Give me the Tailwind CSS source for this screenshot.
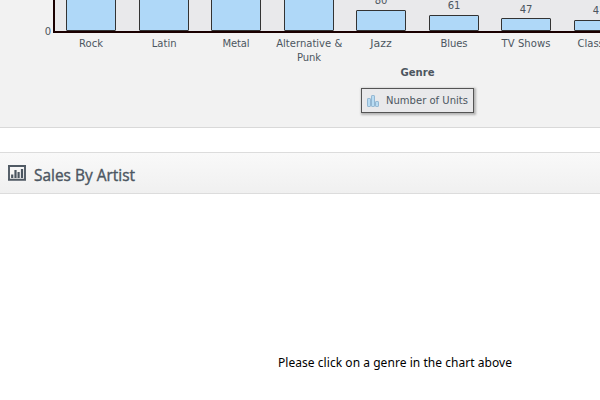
<!DOCTYPE html>
<html lang="en">
<head>
<meta charset="utf-8">
<title>Sales</title>
<script src="https://cdn.jsdelivr.net/npm/@tailwindcss/browser@4"></script>
</head>
<body class="flex h-[400px] w-[600px] flex-col overflow-hidden bg-white">
<section class="flex h-32 shrink-0 flex-col border-b border-[#d9d9d9] bg-[#f2f2f2] font-['DejaVu_Sans',sans-serif]">
  <svg class="block h-[84px] w-[600px] shrink-0" viewBox="0 0 600 84" font-size="10" fill="#4c565f" text-anchor="middle">
    <rect x="54" y="0" width="546" height="32" fill="#e9e9eb"/>
    <g fill="#afd8f8" stroke="#333333">
      <rect x="66.5" y="-20.5" width="49" height="51" rx="0.5"/>
      <rect x="139.5" y="-20.5" width="49" height="51" rx="0.5"/>
      <rect x="211.5" y="-20.5" width="49" height="51" rx="0.5"/>
      <rect x="284.500" y="-20.5" width="49" height="51" rx="0.5"/>
      <rect x="356.5" y="10.5" width="49" height="20" rx="0.5"/>
      <rect x="429.5" y="15.5" width="49" height="15" rx="0.5"/>
      <rect x="501.5" y="18.5" width="49" height="12" rx="0.5"/>
      <rect x="574.5" y="20.5" width="49" height="10" rx="0.5"/>
    </g>
    <path d="M54 0V32H600" fill="none" stroke="#1a0000" stroke-width="2"/>
    <text x="48" y="35">0</text>
    <text x="381" y="4">80</text>
    <text x="454" y="9">61</text>
    <text x="526" y="13">47</text>
    <text x="599" y="14">41</text>
    <text x="91" y="47" textLength="24">Rock</text>
    <text x="164.200" y="47" textLength="25">Latin</text>
    <text x="236" y="47" textLength="27">Metal</text>
    <text x="309.200" y="47" textLength="66">Alternative &amp;</text>
    <text x="309" y="61" textLength="24">Punk</text>
    <text x="381" y="47" textLength="21.500" lengthAdjust="spacingAndGlyphs">Jazz</text>
    <text x="454" y="47" textLength="27">Blues</text>
    <text x="526" y="47" textLength="49">TV Shows</text>
    <text x="577.5" y="47" text-anchor="start">Classical</text>
    <text x="417.500" y="76" font-weight="bold" textLength="34" lengthAdjust="spacingAndGlyphs">Genre</text>
  </svg>
  <div class="mt-1 ml-[361px] flex h-[25px] w-[113px] items-center border border-[#545454] bg-[#e9e9eb] pl-[5px] shadow-[1px_1px_2px_1px_#b4b4b4]">
    <svg class="h-3 w-3 shrink-0" viewBox="0 0 12 12" fill="#b9dcf3" stroke="#8bb2cf" stroke-width=".9">
      <rect x=".5" y="3.500" width="3" height="8" rx=".6"/><rect x="4.500" y=".5" width="3" height="11" rx=".6"/><rect x="8.500" y="6.500" width="3" height="5" rx=".6"/>
    </svg>
    <svg class="ml-[7px] h-6 w-[84px] shrink-0" fill="#4c565f" font-size="10"><text x="0" y="15" textLength="82">Number of Units</text></svg>
  </div>
</section>
<header class="mt-6 flex h-[42px] shrink-0 items-center border-y border-[#dcdcdc] bg-linear-to-b from-[#f9f9f9] to-[#f0f0f0] pl-2">
  <svg class="h-4 w-[18px] shrink-0" viewBox="0 0 18 16">
    <path d="M1 .5V15.500M17 .5V15.500M0 1H18M0 14.700H18" fill="none" stroke="#505a64" stroke-width="1.900"/>
    <path d="M4.200 13V9.500M7.500 13V5M10.600 13V7M14 13V4" stroke="#4a5560" stroke-width="2.200"/>
  </svg>
  <svg class="ml-2 h-10 w-[110px] shrink-0 font-['Open_Sans',sans-serif]" fill="#4c5661" stroke="#4c5661" stroke-width=".4" font-size="16.500"><text x="0" y="28" textLength="101" lengthAdjust="spacingAndGlyphs">Sales By Artist</text></svg>
</header>
<main class="flex flex-1 flex-col items-center pt-[160px] pr-0 pl-[190px]">
  <svg class="h-5 w-[234px] shrink-0 font-['Noto_Sans',sans-serif]" fill="#000" font-size="12"><text x="0" y="13" textLength="234" lengthAdjust="spacing">Please click on a genre in the chart above</text></svg>
</main>
</body>
</html>
